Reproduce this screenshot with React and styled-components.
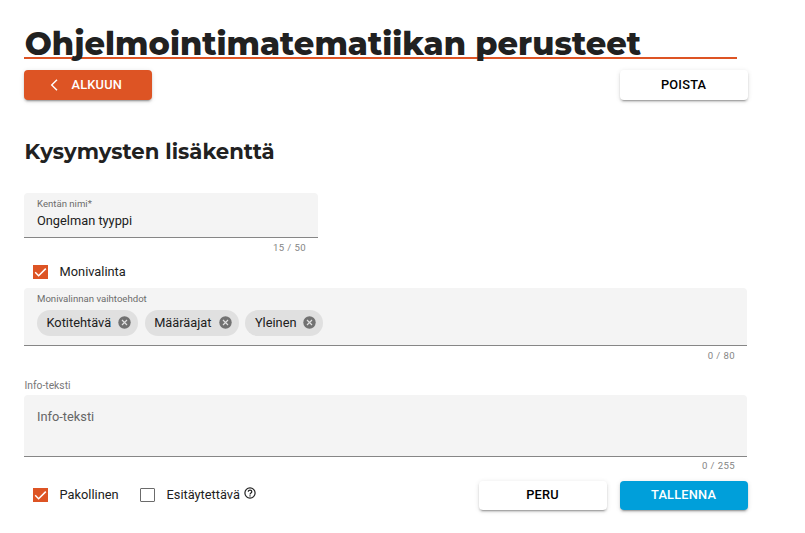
import React from 'react';
import styled, { createGlobalStyle } from 'styled-components';

const Global = createGlobalStyle`
  * { box-sizing: border-box; }
  body { margin: 0; background: #fff; color: #212121; font-family: Roboto, sans-serif; font-size: 12.8px; overflow: hidden; }
`;

const Page = styled.main`
  width: 748px;
  height: 533px;
  padding: 27px 0 0 24px;
  display: flex;
  flex-direction: column;
`;

const Title = styled.h1`
  width: 713px;
  height: 32px;
  flex: none;
  margin: 0;
  padding-left: 0.8px;
  border-bottom: 2px solid #dd5424;
  font: 800 32px/34px Montserrat, sans-serif;
  white-space: nowrap;
`;

const Subtitle = styled.h2`
  height: 28px;
  margin: 37px 0 28px;
  padding-left: 0.6px;
  font: 700 21.2px/28px Montserrat, sans-serif;
  white-space: nowrap;
`;

const Bar = styled.div`
  display: flex;
  justify-content: space-between;
  margin-top: 11px;
`;

const tones = {
  primary: ['#dd5424', '#fff'],
  plain: ['#fff', '#000'],
  save: ['#009fda', '#fff'],
};

const Button = styled.button`
  display: flex;
  align-items: center;
  justify-content: center;
  gap: 9.4px;
  width: 128px;
  height: ${(p) => p.$height || 30}px;
  padding: 0 0.8px ${(p) => (p.$height ? 1 : 0)}px 0;
  border: 0;
  border-radius: 4px;
  background: ${(p) => tones[p.$tone][0]};
  color: ${(p) => tones[p.$tone][1]};
  font: 500 12.8px/16px Roboto, sans-serif;
  letter-spacing: 0.22px;
  box-shadow: 0 3px 1px -2px rgba(0,0,0,.2), 0 2px 2px rgba(0,0,0,.14), 0 1px 5px rgba(0,0,0,.12);
`;

const BackIcon = styled.svg`
  display: block;
  margin-left: -4px;
`;

const Field = styled.div`
  width: ${(p) => p.$width}px;
  height: ${(p) => p.$height}px;
  padding: ${(p) => p.$top || 5}px 13px 0;
  background: #f4f4f4;
  border-bottom: 1px solid #868686;
  border-radius: 4px 4px 0 0;
`;

const Label = styled.div`
  height: 12px;
  color: #6c6c6c;
  font-size: 9.6px;
  line-height: 12px;
`;

const Value = styled.div`
  margin-top: 3px;
  line-height: 16px;
`;

const Placeholder = styled.div`
  color: #666;
  line-height: 16px;
`;

const Counter = styled.div`
  width: ${(p) => p.$width}px;
  height: ${(p) => p.$height}px;
  padding: ${(p) => p.$top || 4}px 12px 0 0;
  color: #858585;
  font-size: 9.6px;
  line-height: 12px;
  letter-spacing: 0.38px;
  text-align: right;
`;

const CheckLabel = styled.label`
  display: flex;
  align-items: center;
  gap: 11.6px;
  line-height: 16px;
`;

const CheckRow = styled.div`
  display: flex;
  align-items: center;
  height: 16px;
  margin: 0 0 8px 9px;
`;

const Box = styled.span`
  display: block;
  width: 15px;
  height: 14px;
  border: 1px solid ${(p) => (p.$checked ? '#dd5424' : '#6b6b6b')};
  border-radius: ${(p) => (p.$checked ? 0 : 1)}px;
  background: ${(p) => (p.$checked ? '#dd5424' : '#fff')};
  svg { display: block; }
`;

const Chips = styled.div`
  display: flex;
  margin-top: 5px;
`;

const ChipBox = styled.span`
  display: flex;
  align-items: center;
  justify-content: space-between;
  width: ${(p) => p.$width}px;
  height: 26px;
  margin-right: 6.7px;
  padding: 0 7px 1px 9.5px;
  border-radius: 13px;
  background: #e0e0e0;
  white-space: nowrap;
`;

const InfoHeading = styled.div`
  height: 14px;
  margin-bottom: 2px;
  padding-left: 0.5px;
  color: #777;
  font-size: 10.3px;
  line-height: 14px;
`;

const Footer = styled.div`
  display: flex;
  justify-content: space-between;
  align-items: flex-start;
  width: 724px;
`;

const Options = styled.div`
  display: flex;
  gap: 21.3px;
  margin: 6px 0 0 9px;
`;

const Actions = styled.div`
  display: flex;
  gap: 13px;
`;

const HelpIcon = styled.svg`
  display: block;
  margin: -4px 0 0 -7.5px;
`;

function Checkbox({ checked, children }) {
  return (
    <CheckLabel>
      <Box $checked={checked}>
        {checked && (
          <svg width="13" height="12" viewBox="0 0 13 12" fill="none" stroke="#fff" strokeWidth="1.5">
            <path d="M1.2 6.3 4.6 9.7 11.8 2.6" />
          </svg>
        )}
      </Box>
      {children}
    </CheckLabel>
  );
}

function Chip({ width, children }) {
  return (
    <ChipBox $width={width}>
      <span>{children}</span>
      <svg width="13" height="13" viewBox="0 0 13 13">
        <circle cx="6.5" cy="6.5" r="6.2" fill="#727272" />
        <path d="m4 4 5 5m0-5-5 5" stroke="#e0e0e0" strokeWidth="1.2" />
      </svg>
    </ChipBox>
  );
}

export default function App() {
  return (
    <>
      <Global />
      <Page>
        <Title>Ohjelmointimatematiikan perusteet</Title>
        <Bar>
          <Button $tone="primary">
            <BackIcon width="13" height="14" viewBox="0 0 13 14" fill="none" stroke="#fff" strokeWidth="1.4">
              <path d="M8 1.7 2.7 7 8 12.3" />
            </BackIcon>
            ALKUUN
          </Button>
          <Button $tone="plain">POISTA</Button>
        </Bar>
        <Subtitle>Kysymysten lisäkenttä</Subtitle>
        <Field $width={294} $height={45}>
          <Label>Kentän nimi*</Label>
          <Value>Ongelman tyyppi</Value>
        </Field>
        <Counter $width={294} $height={26}>15 / 50</Counter>
        <CheckRow><Checkbox checked>Monivalinta</Checkbox></CheckRow>
        <Field $width={723} $height={58}>
          <Label>Monivalinnan vaihtoehdot</Label>
          <Chips>
            <Chip width={101}>Kotitehtävä</Chip>
            <Chip width={94}>Määräajat</Chip>
            <Chip width={78}>Yleinen</Chip>
          </Chips>
        </Field>
        <Counter $width={723} $height={33}>0 / 80</Counter>
        <InfoHeading>Info-teksti</InfoHeading>
        <Field $width={723} $height={62} $top={14}>
          <Placeholder>Info-teksti</Placeholder>
        </Field>
        <Counter $width={723} $height={24} $top={3}>0 / 255</Counter>
        <Footer>
          <Options>
            <Checkbox checked>Pakollinen</Checkbox>
            <Checkbox>
              Esitäytettävä
              <HelpIcon width="12" height="12" viewBox="0 0 12 12" fill="none" stroke="#222" strokeWidth="1.2">
                <circle cx="6" cy="6" r="5.1" />
                <path d="M4.3 4.8c0-2.3 3.5-2.2 3.5 0 0 1.2-1.8 1.4-1.8 2.7M6 8.3v1.1" />
              </HelpIcon>
            </Checkbox>
          </Options>
          <Actions>
            <Button $tone="plain" $height={29}>PERU</Button>
            <Button $tone="save" $height={29}>TALLENNA</Button>
          </Actions>
        </Footer>
      </Page>
    </>
  );
}
